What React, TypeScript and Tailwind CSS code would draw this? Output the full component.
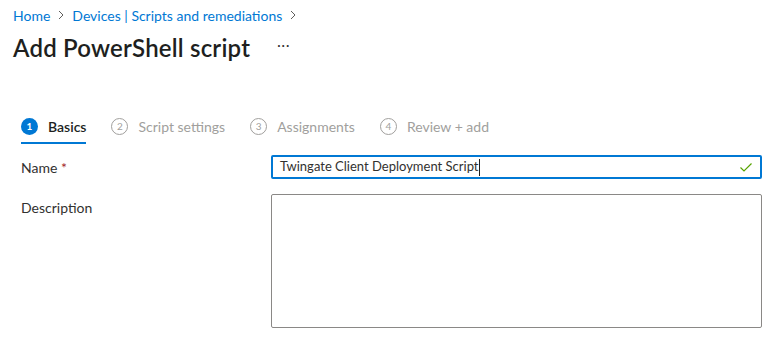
import React from 'react';

const font = { fontFamily: 'Lato, "Open Sans", sans-serif' };

const steps = [
  { n: 1, label: 'Basics' },
  { n: 2, label: 'Script settings' },
  { n: 3, label: 'Assignments' },
  { n: 4, label: 'Review + add' },
];

const Chevron = () => (
  <svg width="12" height="12" viewBox="0 0 12 12" className="mx-[5px]">
    <path d="M4 2l4 4-4 4" fill="none" stroke="#605e5c" strokeWidth="1" />
  </svg>
);

export default function App() {
  return (
    <div className="w-[783px] h-[348px] bg-white overflow-hidden text-[#323130]" style={font}>
      {/* Breadcrumb */}
      <div className="flex items-center px-[13px] pt-[5px] h-[25px] text-[14px] text-[#0078d4]">
        <span>Home</span>
        <Chevron />
        <span>Devices | Scripts and remediations</span>
        <Chevron />
      </div>

      {/* Title */}
      <div className="flex items-center px-[13px] h-[46px]">
        <h1 className="text-[24px] font-semibold text-[#201f1e] tracking-[0.2px]">Add PowerShell script</h1>
        <span className="ml-[27px] text-[#323130] text-[13px] tracking-[1px] -mt-[4px]">···</span>
      </div>

      {/* Steps */}
      <div className="flex px-[21px] mt-[42px] gap-[25px]">
        {steps.map((s) => {
          const active = s.n === 1;
          return (
            <div key={s.n} className="flex flex-col">
              <div className="flex items-center h-[26px]">
                <span
                  className={`w-[17px] h-[17px] rounded-full flex items-center justify-center text-[10px] ${
                    active
                      ? 'bg-[#0078d4] text-white font-bold'
                      : 'border border-[#a19f9d] text-[#a19f9d]'
                  }`}
                >
                  {s.n}
                </span>
                <span
                  className={`ml-[10px] text-[14px] ${
                    active ? 'font-semibold text-[#201f1e]' : 'text-[#a19f9d]'
                  }`}
                >
                  {s.label}
                </span>
              </div>
              <div className={`h-[2px] mt-[3px] ${active ? 'bg-[#0078d4]' : 'bg-transparent'}`} />
            </div>
          );
        })}
      </div>

      {/* Form */}
      <div className="px-[21px] mt-[11px] flex flex-col gap-[15px]">
        <div className="flex items-center">
          <label className="w-[250px] text-[14px] text-[#323130]">
            Name <span className="text-[#a4262c]">*</span>
          </label>
          <div className="flex-1 h-[24px] border-2 border-[#0078d4] rounded-[2px] flex items-center px-[7px]">
            <span className="text-[13px] text-[#323130]">Twingate Client Deployment Script</span>
            <span className="w-px h-[17px] bg-[#201f1e]" />
            <svg className="ml-auto" width="14" height="14" viewBox="0 0 14 14">
              <path d="M1.5 7.5l3.5 3.5 7.5-7.5" fill="none" stroke="#57a300" strokeWidth="1.2" />
            </svg>
          </div>
        </div>
        <div className="flex items-start">
          <label className="w-[250px] text-[14px] text-[#323130] pt-[3px]">Description</label>
          <div className="flex-1 h-[134px] border border-[#8a8886] rounded-[2px]" />
        </div>
      </div>
    </div>
  );
}
